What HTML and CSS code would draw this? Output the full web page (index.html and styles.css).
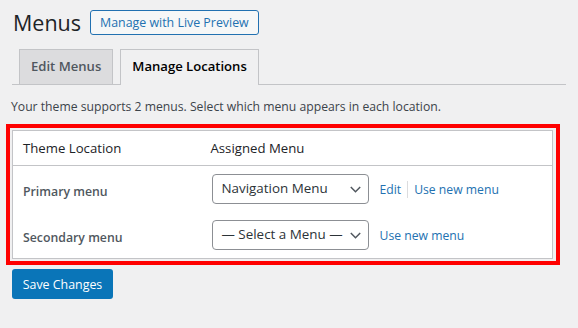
FILE: index.html
```html
<!DOCTYPE html>
<html lang="en">
<head>
  <meta charset="UTF-8"/>
  <title>Menus</title>
  <link rel="stylesheet" href="styles.css">
</head>
<body>
  <div class="wrap">

    <!-- Título + botão de preview -->
    <div class="page-head">
      <h1>Menus</h1>
      <a href="#" class="btn-secondary">Manage with Live Preview</a>
    </div>

    <!-- Abas -->
    <nav class="tabs">
      <a href="#" class="tab">Edit Menus</a>
      <a href="#" class="tab active">Manage Locations</a>
    </nav>

    <p class="desc">Your theme supports 2 menus. Select which menu appears in each location.</p>

    <!-- Tabela de localizações -->
    <div class="highlight">
      <table class="locations">
        <colgroup>
          <col class="col-label">
          <col>
        </colgroup>
        <thead>
          <tr>
            <th>Theme Location</th>
            <th class="assigned">Assigned Menu</th>
          </tr>
        </thead>
        <tbody>
          <tr>
            <td class="loc-name">Primary menu</td>
            <td class="loc-menu">
              <div class="menu-cell">
                <div class="select">
                  <span>Navigation Menu</span>
                  <svg width="11" height="7" viewBox="0 0 11 7"><path d="M0.8 1 L5.5 5.7 L10.2 1" fill="none" stroke="#50575e" stroke-width="1.5"/></svg>
                </div>
                <a href="#" class="link">Edit</a>
                <span class="sep"></span>
                <a href="#" class="link">Use new menu</a>
              </div>
            </td>
          </tr>
          <tr>
            <td class="loc-name">Secondary menu</td>
            <td class="loc-menu">
              <div class="menu-cell">
                <div class="select">
                  <span>— Select a Menu —</span>
                  <svg width="11" height="7" viewBox="0 0 11 7"><path d="M0.8 1 L5.5 5.7 L10.2 1" fill="none" stroke="#50575e" stroke-width="1.5"/></svg>
                </div>
                <a href="#" class="link">Use new menu</a>
              </div>
            </td>
          </tr>
        </tbody>
      </table>
    </div>

    <button class="btn-primary">Save Changes</button>
  </div>
</body>
</html>
```

FILE: styles.css
```css
/* === Base === */
* { margin:0; padding:0; box-sizing:border-box; }
body {
  background: #f0f0f1;
  color: #3c434a;
  font-family: "Open Sans", "Noto Sans", sans-serif;
  font-size: 12.2px;
}
a { text-decoration: none; }

.wrap { padding: 10px 0 0 12px; width: 566px; }

/* === Cabeçalho === */
.page-head {
  display: flex;
  align-items: center;
  gap: 9px;
  height: 25px;
  margin-left: 1px;
}
.page-head h1 {
  font-size: 21.5px;
  font-weight: 400;
  color: #1d2327;
  line-height: 25px;
}
.btn-secondary {
  display: inline-block;
  height: 25px;
  line-height: 23px;
  padding: 0 9px;
  border: 1px solid #2271b1;
  border-radius: 3px;
  background: #f6f7f7;
  color: #2271b1;
  font-size: 12.4px;
}

/* === Abas === */
.tabs {
  display: flex;
  gap: 7px;
  margin-top: 14px;
  padding-left: 7px;
  border-bottom: 1px solid #c3c4c7;
}
.tab {
  height: 35px;
  line-height: 33px;
  padding: 0 11px;
  border: 1px solid #c3c4c7;
  border-bottom: none;
  background: #dcdcde;
  color: #50575e;
  font-size: 13.1px;
  font-weight: 600;
  margin-bottom: -1px;
}
.tab.active {
  background: #f0f0f1;
  color: #000;
  height: 36px;
}

.desc {
  margin: 13px 0 0 -1px;
  line-height: 18px;
  color: #3c434a;
}

/* === Caixa vermelha + tabela === */
.highlight {
  margin: 8px 0 0 -6px;
  width: 554px;
  border: 4px solid #f00;
  padding: 2px 3px 2px 2px;
}
.locations {
  width: 100%;
  table-layout: fixed;
  border-collapse: collapse;
  background: #fff;
  border: 1px solid #c3c4c7;
  font-size: 13.2px;
}
.col-label { width: 198px; }
.locations th {
  text-align: left;
  font-weight: 400;
  color: #1d2327;
  height: 35px;
  padding: 0 10px;
  border-bottom: 1px solid #c3c4c7;
}
.locations th.assigned { padding-left: 0; }
.loc-name {
  vertical-align: top;
  padding: 16px 10px 0;
  line-height: 20px;
  font-size: 12.3px;
  font-weight: 600;
  color: #50575e;
}
.loc-menu { padding: 8px 0; }

.menu-cell {
  display: flex;
  align-items: center;
  height: 30px;
}
.select {
  display: flex;
  align-items: center;
  justify-content: space-between;
  width: 157px;
  height: 30px;
  margin-left: 1px;
  padding: 0 7px 0 9px;
  border: 1px solid #8c8f94;
  border-radius: 4px;
  color: #2c3338;
  font-size: 13.4px;
  white-space: nowrap;
}
.select span { margin-top: -2px; }
.select svg { margin-top: 1px; }
.link {
  color: #2271b1;
  font-size: 12.2px;
}
.select + .link { margin-left: 11px; }
.sep {
  width: 1px;
  height: 17px;
  background: #dcdcde;
  margin: 0 6px;
}

/* === Botão salvar === */
.btn-primary {
  display: block;
  margin-top: 4px;
  width: 101px;
  height: 30px;
  border: none;
  border-radius: 3px;
  background: #0a75b8;
  color: #fff;
  font-family: inherit;
  font-size: 12.4px;
}
```
